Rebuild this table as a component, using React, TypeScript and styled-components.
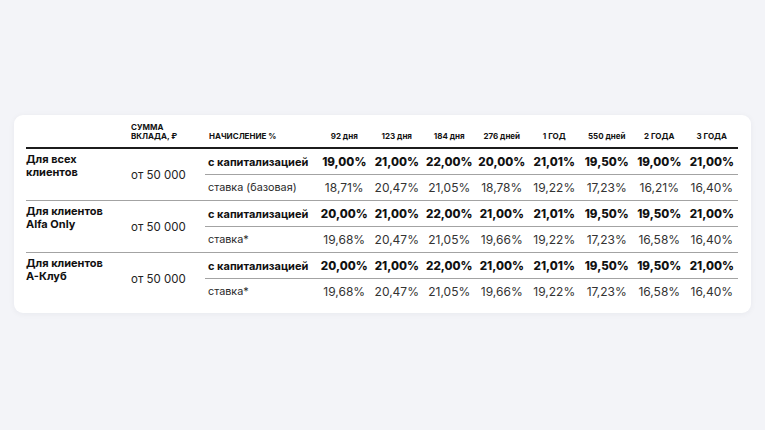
import React from 'react'
import styled, { createGlobalStyle } from 'styled-components'

const GlobalStyle = createGlobalStyle`
  html, body {
    margin: 0;
    padding: 0;
    background: #f3f4f8;
  }
  body {
    font-family: Inter, "Noto Sans", sans-serif;
    color: #111;
  }
`

const Page = styled.div`
  width: 765px;
  height: 430px;
  box-sizing: border-box;
  padding: 115px 14px 0 14px;
`

const Card = styled.div`
  width: 737px;
  box-sizing: border-box;
  padding: 8px 13px 9px 12px;
  background: #fff;
  border-radius: 9px;
  box-shadow: 0 1px 6px rgba(20, 30, 60, 0.05);
`

const Table = styled.table`
  width: 712px;
  table-layout: fixed;
  border-collapse: collapse;
  border-spacing: 0;
`

const Th = styled.th<{ $align?: string; $pad?: number }>`
  height: 24px;
  padding: 0 0 6px ${p => p.$pad ?? 0}px;
  box-sizing: border-box;
  vertical-align: bottom;
  text-align: ${p => p.$align ?? 'center'};
  font-size: 8px;
  line-height: 9px;
  font-weight: 700;
  color: #111;
  border-bottom: 2px solid #1c1c1c;
`

const Td = styled.td<{ $last?: boolean }>`
  height: 25px;
  padding: 0;
  vertical-align: middle;
  border-bottom: ${p => (p.$last ? 'none' : '1px solid #a3a3a3')};
`

const Label = styled(Td)`
  vertical-align: top;
  padding-top: 4px;
  font-size: 11px;
  line-height: 13px;
  font-weight: 700;
`

const Amount = styled(Td)`
  font-size: 11.5px;
  font-weight: 400;
  color: #222;
  padding-top: 1px;
`

const Kind = styled(Td)<{ $bold?: boolean }>`
  padding-left: 3px;
  font-size: ${p => (p.$bold ? '11px' : '10.8px')};
  font-weight: ${p => (p.$bold ? 700 : 400)};
  color: ${p => (p.$bold ? '#111' : '#2a2a2a')};
  white-space: nowrap;
`

const Value = styled(Td)<{ $bold?: boolean }>`
  text-align: center;
  font-size: ${p => (p.$bold ? '11.6px' : '12px')};
  font-weight: ${p => (p.$bold ? 800 : 400)};
  color: ${p => (p.$bold ? '#111' : '#333')};
  white-space: nowrap;
`

const terms = ['92 дня', '123 дня', '184 дня', '276 дней', '1 ГОД', '550 дней', '2 ГОДА', '3 ГОДА']

type Group = {
  title: string[]
  amount: string
  kind: string
  cap: string[]
  base: string[]
}

const groups: Group[] = [
  {
    title: ['Для всех', 'клиентов'],
    amount: 'от 50 000',
    kind: 'ставка (базовая)',
    cap: ['19,00%', '21,00%', '22,00%', '20,00%', '21,01%', '19,50%', '19,00%', '21,00%'],
    base: ['18,71%', '20,47%', '21,05%', '18,78%', '19,22%', '17,23%', '16,21%', '16,40%'],
  },
  {
    title: ['Для клиентов', 'Alfa Only'],
    amount: 'от 50 000',
    kind: 'ставка*',
    cap: ['20,00%', '21,00%', '22,00%', '21,00%', '21,01%', '19,50%', '19,50%', '21,00%'],
    base: ['19,68%', '20,47%', '21,05%', '19,66%', '19,22%', '17,23%', '16,58%', '16,40%'],
  },
  {
    title: ['Для клиентов', 'А-Клуб'],
    amount: 'от 50 000',
    kind: 'ставка*',
    cap: ['20,00%', '21,00%', '22,00%', '21,00%', '21,01%', '19,50%', '19,50%', '21,00%'],
    base: ['19,68%', '20,47%', '21,05%', '19,66%', '19,22%', '17,23%', '16,58%', '16,40%'],
  },
]

export default function App() {
  return (
    <Page>
      <GlobalStyle />
      <Card>
        <Table>
          <colgroup>
            <col style={{ width: 105 }} />
            <col style={{ width: 74 }} />
            <col style={{ width: 113 }} />
            {terms.map(t => (
              <col key={t} style={{ width: 52.5 }} />
            ))}
          </colgroup>
          <thead>
            <tr>
              <Th $align="left"></Th>
              <Th $align="left">
                СУММА
                <br />
                ВКЛАДА, ₽
              </Th>
              <Th $align="left" $pad={4}>НАЧИСЛЕНИЕ %</Th>
              {terms.map(t => (
                <Th key={t}>{t}</Th>
              ))}
            </tr>
          </thead>
          <tbody>
            {groups.map((g, i) => {
              const last = i === groups.length - 1
              return (
                <React.Fragment key={i}>
                  <tr>
                    <Label rowSpan={2} $last={last}>
                      {g.title[0]}
                      <br />
                      {g.title[1]}
                    </Label>
                    <Amount rowSpan={2} $last={last}>{g.amount}</Amount>
                    <Kind $bold>с капитализацией</Kind>
                    {g.cap.map((v, j) => (
                      <Value key={j} $bold>{v}</Value>
                    ))}
                  </tr>
                  <tr>
                    <Kind $last={last}>{g.kind}</Kind>
                    {g.base.map((v, j) => (
                      <Value key={j} $last={last}>{v}</Value>
                    ))}
                  </tr>
                </React.Fragment>
              )
            })}
          </tbody>
        </Table>
      </Card>
    </Page>
  )
}
